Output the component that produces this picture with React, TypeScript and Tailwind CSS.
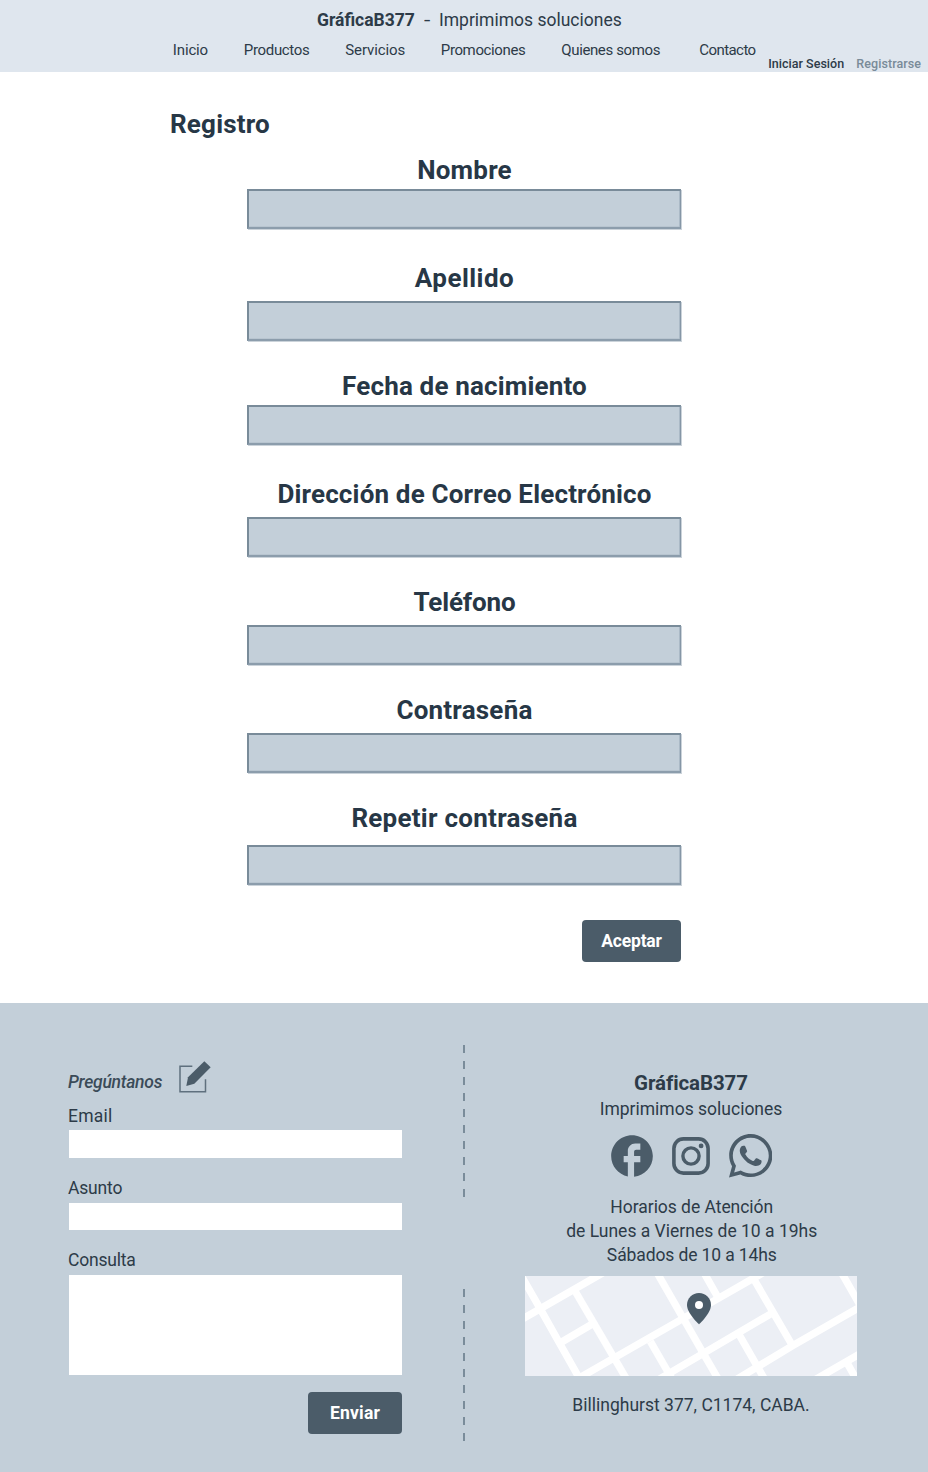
import React from 'react';
import { MdFacebook } from 'react-icons/md';
import { FaWhatsapp } from 'react-icons/fa';

const navItems = [
  { label: 'Inicio', className: 'w-[71px] tracking-[-0.14px]' },
  { label: 'Productos', className: 'w-[101.5px] tracking-[-0.33px]' },
  { label: 'Servicios', className: 'w-[95.5px] tracking-[-0.1px]' },
  { label: 'Promociones', className: 'w-[120.5px] tracking-[-0.38px]' },
  { label: 'Quienes somos', className: 'w-[138px] tracking-[-0.38px]' },
  { label: 'Contacto', className: 'w-[69px] tracking-[-0.57px]' },
];

const fields = [
  { label: 'Nombre', text: 'tracking-[0.21px]', gap: 'mt-[3px]', type: 'text' },
  { label: 'Apellido', text: 'tracking-[0.45px]', gap: 'mt-[7px]', type: 'text' },
  { label: 'Fecha de nacimiento', text: 'tracking-[0.16px]', gap: 'mt-[3px]', type: 'text' },
  { label: 'Dirección de Correo Electrónico', text: 'tracking-[0.17px]', gap: 'mt-[7px]', type: 'email' },
  { label: 'Teléfono', text: 'tracking-[-0.14px]', gap: 'mt-[7px]', type: 'tel' },
  { label: 'Contraseña', text: 'tracking-[0.22px]', gap: 'mt-[7px]', type: 'password' },
  { label: 'Repetir contraseña', text: 'tracking-[0.26px]', gap: 'mt-[11px]', type: 'password' },
];

const roads = [
  'M30 166L262 33l30-17', 'M25 17L90 130l60 107 65 115', 'M155 231l92-54', 'M195 78l165 282',
  'M190 349l120-69 315-180 150-86', 'M437 16l143 249 55 95', 'M430 353l150-88 205-120', 'M421 229l72 125',
  'M578 16l45 80', 'M733 45l115 198', 'M680 343l168-101 213-122', 'M688 210l77 135', 'M990 15l65 114',
  'M905 350l156-90', 'M1012 295l30 53',
];

function Header() {
  return (
    <header className="flex h-[72px] flex-col bg-[#dfe6ee] pt-2 text-[#2d3b48]">
      <div className="flex h-6 pl-[317px] text-[17.5px] leading-6 whitespace-pre">
        <strong className="w-[107px] font-bold">GráficaB377</strong>
        <span className="w-[15px] origin-left scale-x-130">-</span>
        <span>Imprimimos soluciones</span>
      </div>
      <nav className="mt-2 flex h-8 pl-[172.8px] text-[15px] leading-5 whitespace-nowrap">
        {navItems.map((item) => (
          <a key={item.label} className={item.className}>{item.label}</a>
        ))}
        <div className="flex pt-4 text-[12.5px] leading-4 font-medium">
          <a className="w-[88px] tracking-[0.02px]">Iniciar Sesión</a>
          <a className="tracking-[0.07px] text-[#798b99]">Registrarse</a>
        </div>
      </nav>
    </header>
  );
}

function EditIcon() {
  return (
    <svg viewBox="381 57 108 108" className="h-9 w-9">
      <path d="M427 78.500H390V155.500H466.500V118" fill="none" stroke="#5f707e" strokeWidth="4.500" />
      <path d="M463 64l19 18-49 49-24 7 5-26z" fill="#4b5c69" />
    </svg>
  );
}

function InstagramIcon() {
  return (
    <svg viewBox="0 0 38 38" className="h-[38px] w-[38px]" fill="none" stroke="#4b5c69">
      <rect x="1.900" y="1.900" width="34.200" height="34.200" rx="9.500" strokeWidth="3.600" />
      <circle cx="19" cy="19" r="8.100" strokeWidth="3.400" />
      <circle cx="29.100" cy="8.900" r="2.400" fill="#4b5c69" stroke="none" />
    </svg>
  );
}

function LocationMap() {
  return (
    <svg viewBox="45 33 996 300" className="mt-[9px] h-[100px] w-[332px] bg-[#eceff5]">
      <g fill="none" stroke="#fff" strokeWidth="22">
        {roads.map((d) => <path key={d} d={d} />)}
      </g>
      <path d="M567 84c-20 0-36 16-36 36 0 25 36 58 36 58s36-33 36-58c0-20-16-36-36-36z" fill="#4b5c69" />
      <circle cx="567" cy="120" r="12" fill="#fff" />
    </svg>
  );
}

function Divider() {
  return <div className="h-[152px] w-[2px] bg-[repeating-linear-gradient(to_bottom,#7a8c9a_0_8px,transparent_8px_16px)]" />;
}

export default function App() {
  return (
    <div className="h-[1472px] w-[928px] overflow-hidden bg-white font-['Roboto',sans-serif] text-[#2d3b48]">
      <Header />
      <main className="h-[931px] pt-9">
        <h1 className="pl-[170px] text-[26px] leading-8 font-bold tracking-[0.2px] text-[#273746]">Registro</h1>
        <form className="ml-[247px] w-[435px] pt-[14px]">
          {fields.map((f) => (
            <label key={f.label} className="flex h-[108px] flex-col">
              <span className={`text-center text-[26px] leading-8 font-bold text-[#273746] ${f.text}`}>{f.label}</span>
              <input
                type={f.type}
                className={`h-10 w-[434px] border-t-2 border-r border-b-2 border-l-2 border-t-[#798b99] border-r-[#8596a6] border-b-[#8c9dac] border-l-[#798b99] bg-[#c3cfd9] shadow-[1px_1px_0_#cbd3da,inset_-1px_0_0_#aab9c6,inset_0_-1px_0_#b8c5d0] ${f.gap}`}
              />
            </label>
          ))}
          <button type="button" className="mt-[10px] ml-[335px] block h-[42px] w-[99px] rounded bg-[#4b5c69] text-[17.5px] leading-[42px] font-bold tracking-[-0.2px] text-white">
            Aceptar
          </button>
        </form>
      </main>
      <footer className="flex h-[469px] bg-[#c3cfd9]">
        <form className="w-[463px] pt-[56px] pl-[68px] text-[17.5px] leading-6">
          <div className="flex h-9">
            <span className="w-[109px] pt-[11px] font-medium tracking-[-0.25px] text-[#3b4b58] italic">Pregúntanos</span>
            <EditIcon />
          </div>
          <label className="mt-[9px] block h-[72px]">
            <span className="block tracking-[0.25px]">Email</span>
            <input className="mt-[2px] ml-px block h-7 w-[333px] bg-white" />
          </label>
          <label className="block h-[72px]">
            <span className="block tracking-[-0.17px]">Asunto</span>
            <input className="mt-[3px] ml-px block h-[27px] w-[333px] bg-white" />
          </label>
          <label className="block">
            <span className="block tracking-[-0.2px]">Consulta</span>
            <textarea className="mt-[3px] ml-px block h-[100px] w-[333px] resize-none bg-white" />
          </label>
          <button type="button" className="mt-[17px] ml-60 block h-[42px] w-[94px] rounded bg-[#4b5c69] text-[17.5px] leading-[42px] font-bold tracking-[0.2px] text-white">
            Enviar
          </button>
        </form>
        <div className="flex flex-col gap-[92px] pt-[42px]">
          <Divider />
          <Divider />
        </div>
        <div className="ml-[60px] flex w-[332px] flex-col items-center pt-[66px] text-[17.5px] leading-6 whitespace-nowrap">
          <strong className="h-7 text-[20.5px] leading-7 font-bold tracking-[-0.1px]">GráficaB377</strong>
          <span>Imprimimos soluciones</span>
          <div className="mt-[9.5px] mb-[14.5px] flex h-[50px] items-center pr-[3px] text-[#4b5c69]">
            <MdFacebook className="h-[50px] w-[50px]" />
            <div className="ml-[15px]"><InstagramIcon /></div>
            <FaWhatsapp className="ml-[19px] h-[49.6px] w-[43.4px]" />
          </div>
          <span className="pl-[1.5px] tracking-[-0.04px]">Horarios de Atención</span>
          <span className="pl-[1.5px]">de Lunes a Viernes de 10 a 19hs</span>
          <span className="pl-[1.5px] tracking-[-0.12px]">Sábados de 10 a 14hs</span>
          <LocationMap />
          <span className="mt-[17px]">Billinghurst 377, C1174, CABA.</span>
        </div>
      </footer>
    </div>
  );
}
